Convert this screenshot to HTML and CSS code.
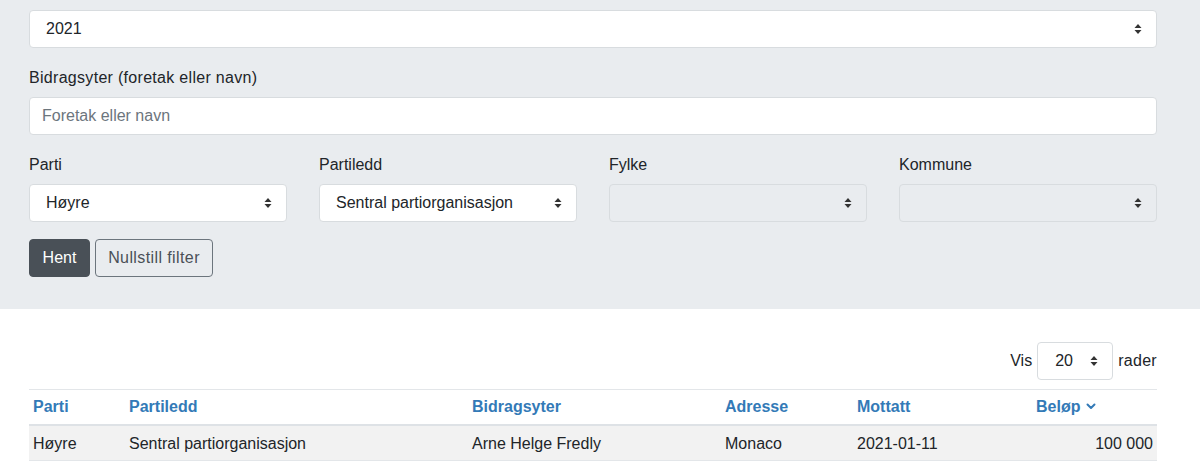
FILE: index.html
```html
<!DOCTYPE html>
<html lang="no">
<head>
<meta charset="utf-8">
<title>Bidrag</title>
<link rel="stylesheet" href="styles.css">
</head>
<body>
<section class="filters">
  <div class="container">
    <div class="group">
      <select class="control select"><option>2021</option></select>
    </div>
    <div class="group">
      <label class="label wide">Bidragsyter (foretak eller navn)</label>
      <input class="control input" type="text" placeholder="Foretak eller navn">
    </div>
    <div class="row4">
      <div class="col">
        <label class="label">Parti</label>
        <select class="control select"><option>Høyre</option></select>
      </div>
      <div class="col">
        <label class="label">Partiledd</label>
        <select class="control select"><option>Sentral partiorganisasjon</option></select>
      </div>
      <div class="col">
        <label class="label">Fylke</label>
        <select class="control select" disabled><option></option></select>
      </div>
      <div class="col">
        <label class="label">Kommune</label>
        <select class="control select" disabled><option></option></select>
      </div>
    </div>
    <div class="buttons">
      <button class="btn btn-dark" type="button">Hent</button>
      <button class="btn btn-outline" type="button">Nullstill filter</button>
    </div>
  </div>
</section>
<section class="results">
  <div class="container">
    <div class="pager">
      <span>Vis</span>
      <select class="control select small"><option>20</option></select>
      <span class="rader">rader</span>
    </div>
    <table class="table">
      <colgroup>
        <col class="c1"><col class="c2"><col class="c3"><col class="c4"><col class="c5"><col class="c6">
      </colgroup>
      <thead>
        <tr>
          <th>Parti</th>
          <th>Partiledd</th>
          <th>Bidragsyter</th>
          <th>Adresse</th>
          <th>Mottatt</th>
          <th>Beløp <svg class="chev" width="10" height="7" viewBox="0 0 10 7"><path d="M1.5 1.5 L5 5 L8.5 1.5" fill="none" stroke="#337ab7" stroke-width="2" stroke-linecap="round" stroke-linejoin="round"/></svg></th>
        </tr>
      </thead>
      <tbody>
        <tr>
          <td>Høyre</td>
          <td>Sentral partiorganisasjon</td>
          <td>Arne Helge Fredly</td>
          <td>Monaco</td>
          <td>2021-01-11</td>
          <td class="num">100 000</td>
        </tr>
      </tbody>
    </table>
  </div>
</section>
</body>
</html>
```

FILE: styles.css
```css
* { box-sizing: border-box; }
html, body { margin: 0; padding: 0; }
body {
  font-family: "Liberation Sans", Arial, sans-serif;
  font-size: 16px;
  line-height: 24px;
  color: #212529;
  background: #fff;
}
.container {
  width: 1128px;
  margin-left: 29px;
}
.filters {
  background: #e9ecef;
  padding: 10px 0 32px;
}
.group { margin-bottom: 17px; }
.label {
  display: block;
  margin-bottom: 8px;
  padding-top: 1px;
  line-height: 24px;
}
.label.wide { letter-spacing: 0.3px; }
.group .label { margin-bottom: 7px; }
.control {
  display: block;
  width: 100%;
  height: 38px;
  padding: 6px 12px;
  font-family: inherit;
  font-size: 16px;
  line-height: 24px;
  color: #212529;
  background-color: #fff;
  border: 1px solid #d8dcdf;
  border-radius: 4px;
  margin: 0;
}
.input::placeholder { color: #6c757d; }
.select {
  -webkit-appearance: none;
  appearance: none;
  padding-left: 16px;
  background-image: url("data:image/svg+xml;utf8,<svg xmlns='http://www.w3.org/2000/svg' width='8' height='12' viewBox='0 0 8 12'><path d='M4 1 L7.5 5 L0.5 5 Z M4 11 L7.5 7 L0.5 7 Z' fill='%23333'/></svg>");
  background-repeat: no-repeat;
  background-position: right 14px center;
  background-size: 8px 12px;
}
.select:disabled {
  background-color: #e9ecef;
  opacity: 1;
}
.row4 {
  display: grid;
  grid-template-columns: repeat(4, 258px);
  column-gap: 32px;
  margin-bottom: 17px;
}
.row4 .label { margin-bottom: 7px; }
.buttons {
  display: flex;
  gap: 5px;
}
.btn {
  font-family: inherit;
  font-size: 16px;
  line-height: 24px;
  height: 38px;
  padding: 6px 12px;
  border-radius: 4px;
  border: 1px solid transparent;
  cursor: pointer;
}
.btn-dark {
  background: #495057;
  border-color: #495057;
  color: #fff;
  width: 61px;
}
.btn-outline {
  background: transparent;
  border-color: #6c757d;
  color: #495057;
  letter-spacing: 0.4px;
  width: 118px;
  padding: 6px 0;
}
.results { padding-top: 33px; }
.pager {
  display: flex;
  justify-content: flex-end;
  align-items: center;
  gap: 5px;
  margin-bottom: 9px;
}
.rader { letter-spacing: 0.3px; }
.select.small {
  width: 76px;
  padding-left: 17px;
}
.table {
  width: 100%;
  border-collapse: collapse;
  table-layout: fixed;
}
.c1 { width: 96px; }
.c2 { width: 343px; }
.c3 { width: 253px; }
.c4 { width: 132px; }
.c5 { width: 179px; }
.c6 { width: 125px; }
.table th, .table td {
  padding: 5px 4px;
  text-align: left;
  line-height: 24px;
  white-space: nowrap;
}
.table thead th {
  color: #337ab7;
  font-weight: bold;
  border-top: 1px solid #e3e6e9;
  border-bottom: 2px solid #dee2e6;
}
.table tbody td {
  border-bottom: 1px solid #e3e6e9;
  padding-top: 6px;
  padding-bottom: 4px;
}
.table tbody tr { background: #f2f2f2; }
.table td.num { text-align: right; }
.chev { vertical-align: 2px; margin-left: 1px; }
```
